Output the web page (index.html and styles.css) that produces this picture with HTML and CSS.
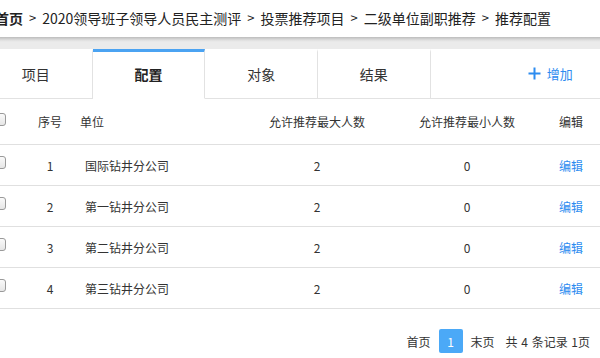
FILE: index.html
```html
<!DOCTYPE html>
<html lang="zh">
<head>
<meta charset="utf-8">
<link rel="stylesheet" href="styles.css">
</head>
<body>
<div class="page">
  <div class="crumb">
    <span class="crumb-home">首页</span><span class="sep">&gt;</span><span>2020领导班子领导人员民主测评</span><span class="sep">&gt;</span><span>投票推荐项目</span><span class="sep">&gt;</span><span>二级单位副职推荐</span><span class="sep">&gt;</span><span>推荐配置</span>
  </div>
  <div class="shade"></div>
  <div class="tabs">
    <div class="tab">项目</div>
    <div class="tab active">配置</div>
    <div class="tab">对象</div>
    <div class="tab">结果</div>
    <div class="tab-rest">
      <span class="add">
        <svg class="plus" width="13" height="13" viewBox="0 0 13 13"><path d="M6.5 0.5v12M0.5 6.5h12" stroke="#2d8cf0" stroke-width="2" fill="none"/></svg>
        <span>增加</span>
      </span>
    </div>
  </div>
  <div class="grid">
    <div class="row head">
      <div class="c-chk"><span class="chk"></span></div>
      <div class="c-no">序号</div>
      <div class="c-unit">单位</div>
      <div class="c-num">允许推荐最大人数</div>
      <div class="c-num">允许推荐最小人数</div>
      <div class="c-op">编辑</div>
    </div>
    <div class="row">
      <div class="c-chk"><span class="chk"></span></div>
      <div class="c-no">1</div>
      <div class="c-unit d">国际钻井分公司</div>
      <div class="c-num">2</div>
      <div class="c-num">0</div>
      <div class="c-op link">编辑</div>
    </div>
    <div class="row">
      <div class="c-chk"><span class="chk"></span></div>
      <div class="c-no">2</div>
      <div class="c-unit d">第一钻井分公司</div>
      <div class="c-num">2</div>
      <div class="c-num">0</div>
      <div class="c-op link">编辑</div>
    </div>
    <div class="row">
      <div class="c-chk"><span class="chk"></span></div>
      <div class="c-no">3</div>
      <div class="c-unit d">第二钻井分公司</div>
      <div class="c-num">2</div>
      <div class="c-num">0</div>
      <div class="c-op link">编辑</div>
    </div>
    <div class="row">
      <div class="c-chk"><span class="chk"></span></div>
      <div class="c-no">4</div>
      <div class="c-unit d">第三钻井分公司</div>
      <div class="c-num">2</div>
      <div class="c-num">0</div>
      <div class="c-op link">编辑</div>
    </div>
  </div>
  <div class="pager">
    <span>首页</span>
    <span class="cur">1</span>
    <span>末页</span>
    <span class="total">共 4 条记录 1页</span>
  </div>
</div>
</body>
</html>
```

FILE: styles.css
```css
html, body {
  margin: 0;
  padding: 0;
  background: #fff;
  overflow: hidden;
}
body {
  width: 600px;
  height: 358px;
  font-family: "Noto Sans CJK SC", "Noto Sans", sans-serif;
  color: #333;
}
.page {
  width: 600px;
}
.crumb {
  height: 35px;
  display: flex;
  align-items: center;
  margin-left: -5px;
  font-size: 14px;
  color: #222;
  white-space: nowrap;
}
.crumb-home {
  font-weight: bold;
}
.sep {
  margin: 0 6px;
  font-size: 13px;
}
.shade {
  height: 14px;
  background: linear-gradient(#ffffff 0, #ffffff 2px, #bcbcbc 2px, #dedede 5px, #ebebeb 7px, #ebebeb 14px);
}
.tabs {
  display: flex;
  height: 50px;
  margin-left: -20px;
  width: 620px;
}
.tab {
  width: 112.67px;
  flex: none;
  box-sizing: border-box;
  border-right: 1px solid #e2e2e2;
  border-bottom: 1px solid #e2e2e2;
  border-top: 3px solid transparent;
  display: flex;
  align-items: center;
  justify-content: center;
  font-size: 14px;
  color: #333;
  padding-bottom: 2px;
}
.tab.active {
  border-top-color: #4ba3f2;
  border-bottom-color: #fff;
  font-weight: bold;
  color: #222;
}
.tab-rest {
  flex: 1;
  display: flex;
  align-items: center;
  box-sizing: border-box;
  border-bottom: 1px solid #e2e2e2;
  padding-left: 97px;
}
.add {
  display: flex;
  align-items: center;
  gap: 6px;
  color: #2d8cf0;
  font-size: 13px;
}
.plus {
  display: block;
}
.grid {
  margin-left: -10px;
  width: 610px;
}
.row {
  display: grid;
  grid-template-columns: 40px 40px 172px 150px 150px 58px;
  height: 41px;
  border-bottom: 1px solid #e0e0e0;
  box-sizing: border-box;
  align-items: center;
  font-size: 12px;
  color: #333;
}
.row.head {
  height: 46px;
}
.c-chk {
  display: flex;
  align-items: center;
  padding-left: 3px;
}
.chk {
  width: 11px;
  height: 11px;
  border: 1px solid #9a9a9a;
  border-radius: 3px;
  background: linear-gradient(#fafafa, #e6e6e6);
  margin-top: -5px;
}
.c-no {
  text-align: center;
}
.c-unit {
  padding-left: 10px;
}
.c-unit.d {
  padding-left: 15px;
}
.c-num {
  text-align: center;
}
.c-op {
  text-align: center;
}
.link {
  color: #2d8cf0;
}
.pager {
  display: flex;
  justify-content: flex-end;
  align-items: center;
  gap: 8px;
  margin-top: 20px;
  padding-right: 10px;
  font-size: 12px;
  color: #333;
}
.cur {
  width: 24px;
  height: 24px;
  border-radius: 2px;
  background: #4ba9f7;
  color: #fff;
  display: flex;
  align-items: center;
  justify-content: center;
  font-size: 12px;
}
.total {
  margin-left: 3px;
  word-spacing: 1px;
}
```
